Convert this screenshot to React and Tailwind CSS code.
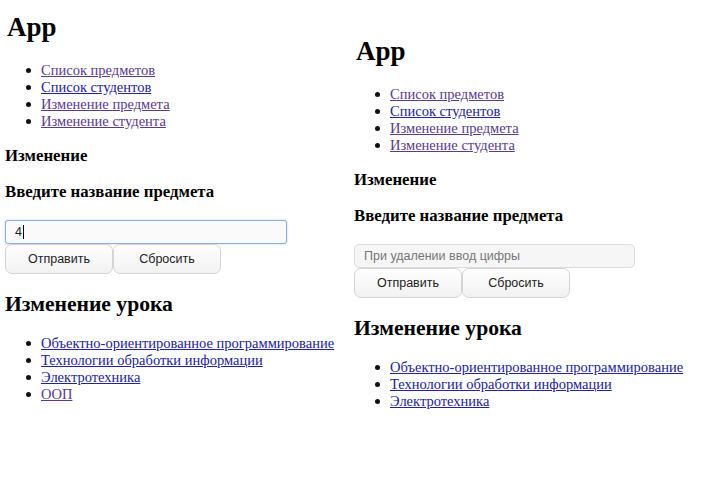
import React from 'react';

const serif = "font-['Liberation_Serif','Times_New_Roman',serif]";
const sans = "font-['Liberation_Sans',Arial,sans-serif]";

function Item({ children, visited }) {
  return (
    <li className="flex items-center">
      <span className="ml-[26px] mr-[10px] h-[5px] w-[5px] shrink-0 rounded-full bg-[#111]" />
      <a href="#" className={`underline ${visited ? 'text-[#5a3a8e]' : 'text-[#22229a]'}`}>
        {children}
      </a>
    </li>
  );
}

function NavList() {
  return (
    <ul className="mt-[20px] text-[14.5px] leading-[17px]">
      <Item visited>Список предметов</Item>
      <Item>Список студентов</Item>
      <Item visited>Изменение предмета</Item>
      <Item visited>Изменение студента</Item>
    </ul>
  );
}

function Page({ focused, lessons }) {
  return (
    <div className={`${serif} text-black`}>
      <h1 className="pl-[7px] pt-[12px] text-[27px] font-bold leading-[30px]">App</h1>
      <NavList />
      <h4 className="mt-[17px] pl-[5px] text-[16.8px] font-bold leading-[18px]">Изменение</h4>
      <h3 className="mt-[18px] pl-[5px] text-[16.8px] font-bold leading-[18px]">
        Введите название предмета
      </h3>
      <div className="mt-[19px] flex flex-col pl-[5px]">
        {focused ? (
          <div className={`${sans} flex h-[24px] w-[282px] items-center rounded-[3px] border border-[#8eaee0] bg-[#fafafa] px-[9px] text-[12.5px] text-[#222] shadow-[0_0_2px_#a9c2ee]`}>
            4<span className="ml-[1px] h-[14px] w-px bg-black" />
          </div>
        ) : (
          <div className={`${sans} flex h-[24px] w-[281px] items-center rounded-[5px] border border-[#dcdcdc] bg-[#f6f6f6] px-[9px] text-[12.5px] text-[#777]`}>
            При удалении ввод цифры
          </div>
        )}
        <div className="flex">
          <button className={`${sans} h-[30px] w-[108px] rounded-[7px] border border-[#d4d4d4] bg-gradient-to-b from-white to-[#f2f2f2] text-[12.5px] text-[#222]`}>
            Отправить
          </button>
          <button className={`${sans} h-[30px] w-[108px] rounded-[7px] border border-[#d4d4d4] bg-gradient-to-b from-white to-[#f2f2f2] text-[12.5px] text-[#222]`}>
            Сбросить
          </button>
        </div>
      </div>
      <h2 className="mt-[17px] pl-[5px] text-[21.6px] font-bold leading-[26px]">Изменение урока</h2>
      <ul className="mt-[18px] text-[14.5px] leading-[17px]">
        {lessons.map((l) => (
          <Item key={l.name} visited={l.visited}>
            {l.name}
          </Item>
        ))}
      </ul>
    </div>
  );
}

export default function App() {
  const left = [
    { name: 'Объектно-ориентированное программирование' },
    { name: 'Технологии обработки информации' },
    { name: 'Электротехника' },
    { name: 'ООП', visited: true },
  ];
  const right = left.slice(0, 3);

  return (
    <div className="flex h-[478px] w-[723px] bg-white">
      <div className="w-[349px] shrink-0">
        <Page focused lessons={left} />
      </div>
      <div className="pt-[24px]">
        <Page lessons={right} />
      </div>
    </div>
  );
}
